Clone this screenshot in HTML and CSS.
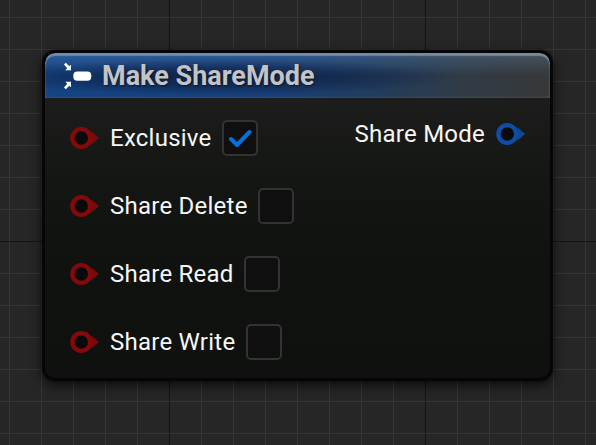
FILE: index.html
```
<!DOCTYPE html>
<html lang="en">
<head>
<meta charset="utf-8">
<title>Make ShareMode</title>
<link rel="stylesheet" href="styles.css">
</head>
<body>
<svg class="defs" width="0" height="0" aria-hidden="true">
  <symbol id="pin" viewBox="0 0 30 24">
    <path d="M22 5L30 12l-8 7Q24 12 22 5z" fill="currentColor" opacity=".9"/>
    <circle cx="12.300" cy="12" r="8.900" fill="#090a0b" stroke="currentColor" stroke-width="4.400"/>
  </symbol>
</svg>
<main class="canvas">
  <section class="node">
    <header class="header">
      <svg class="make-icon" width="30" height="30" viewBox="0 0 30 30" fill="#fff">
        <path d="M1 3.500L2.800 1.700L6.300 5.200L8 3.800V9.300H2.300L4.200 7.200Z"/>
        <path d="M1 26.500L2.800 28.300L6.300 24.800L8 26.200V20.700H2.300L4.200 22.800Z"/>
        <rect x="10.300" y="10.500" width="18" height="9.200" rx="4"/>
      </svg>
      <h1 class="title">Make ShareMode</h1>
    </header>
    <div class="body">
      <div class="inputs">
        <div class="row"><svg class="pin"><use href="#pin"/></svg><span class="label">Exclusive</span><span class="check"><svg width="24" height="20" viewBox="0 0 24 20"><path d="M3 11l6 6L21.500 4" fill="none" stroke="#0870dc" stroke-width="4" stroke-linecap="round" stroke-linejoin="round"/></svg></span></div>
        <div class="row"><svg class="pin"><use href="#pin"/></svg><span class="label">Share Delete</span><span class="check"></span></div>
        <div class="row"><svg class="pin"><use href="#pin"/></svg><span class="label">Share Read</span><span class="check"></span></div>
        <div class="row"><svg class="pin"><use href="#pin"/></svg><span class="label">Share Write</span><span class="check"></span></div>
      </div>
      <div class="output"><span class="label">Share Mode</span><svg class="pin"><use href="#pin"/></svg></div>
    </div>
  </section>
</main>
</body>
</html>
```
FILE: styles.css
```
* { box-sizing: border-box; }
body { margin: 0; font-family: Roboto, "Liberation Sans", sans-serif; }
.defs { display: block; }
.canvas {
  width: 596px;
  height: 445px;
  overflow: hidden;
  padding: 50px 43px 0 42px;
  background-color: #262626;
  background-image:
    linear-gradient(90deg, #151515 1px, transparent 1px),
    linear-gradient(#151515 1px, transparent 1px),
    linear-gradient(90deg, #363636 1px, transparent 1px),
    linear-gradient(#363636 1px, transparent 1px);
  background-size: 256px 256px, 256px 256px, 32px 32px, 32px 32px;
  background-position: 169px 0, 0 241px, 9px 0, 0 17px;
}
.node {
  height: 331px;
  border: 3px solid #050605;
  border-radius: 13px;
  overflow: hidden;
  background: linear-gradient(#1c1d1c 45px, #141613 130px, #0f120f 210px, #0e110e);
  box-shadow: 0 5px 12px rgba(0, 0, 0, .6), 0 0 3px rgba(0, 0, 0, .6);
}
.header {
  height: 45px;
  display: flex;
  align-items: center;
  padding-left: 18px;
  border-radius: 10px 10px 0 0;
  background:
    radial-gradient(ellipse 240px 18px at 170px 24px, rgba(12, 22, 50, .7), rgba(12, 26, 58, .5) 50%, transparent),
    linear-gradient(rgba(120, 165, 215, .25), transparent 50%),
    linear-gradient(90deg, #144482 0, #173f78 45%, #213c5d 65%, #303b45 83%, #373837 100%);
  box-shadow: inset 0 3px 1px rgba(190, 205, 220, .42), inset 0 0 3px rgba(150, 170, 190, .3);
}
.make-icon { flex: none; }
.title {
  margin: 0 0 0 9px;
  font-size: 27px;
  line-height: 30px;
  font-weight: 700;
  color: #c3c4c5;
  text-shadow: 1px 1px 2px rgba(0, 0, 0, .5);
  white-space: nowrap;
}
.body { display: flex; justify-content: space-between; padding: 6px 25px 0 24px; }
.row { display: flex; align-items: center; height: 68px; }
.output { display: flex; align-items: center; height: 60px; }
.pin { flex: none; width: 30px; height: 24px; color: #85090b; }
.output .pin { color: #0f4ea6; margin-left: 10px; }
.label { font-size: 24px; line-height: 28px; letter-spacing: .24px; color: #f7f7f7; white-space: nowrap; }
.row .label { margin: 0 10.500px 0 11px; }
.check {
  display: flex;
  align-items: center;
  justify-content: center;
  width: 36px;
  height: 36px;
  border: 2px solid #323332;
  border-radius: 5px;
  background: #0f0f10;
}
```
